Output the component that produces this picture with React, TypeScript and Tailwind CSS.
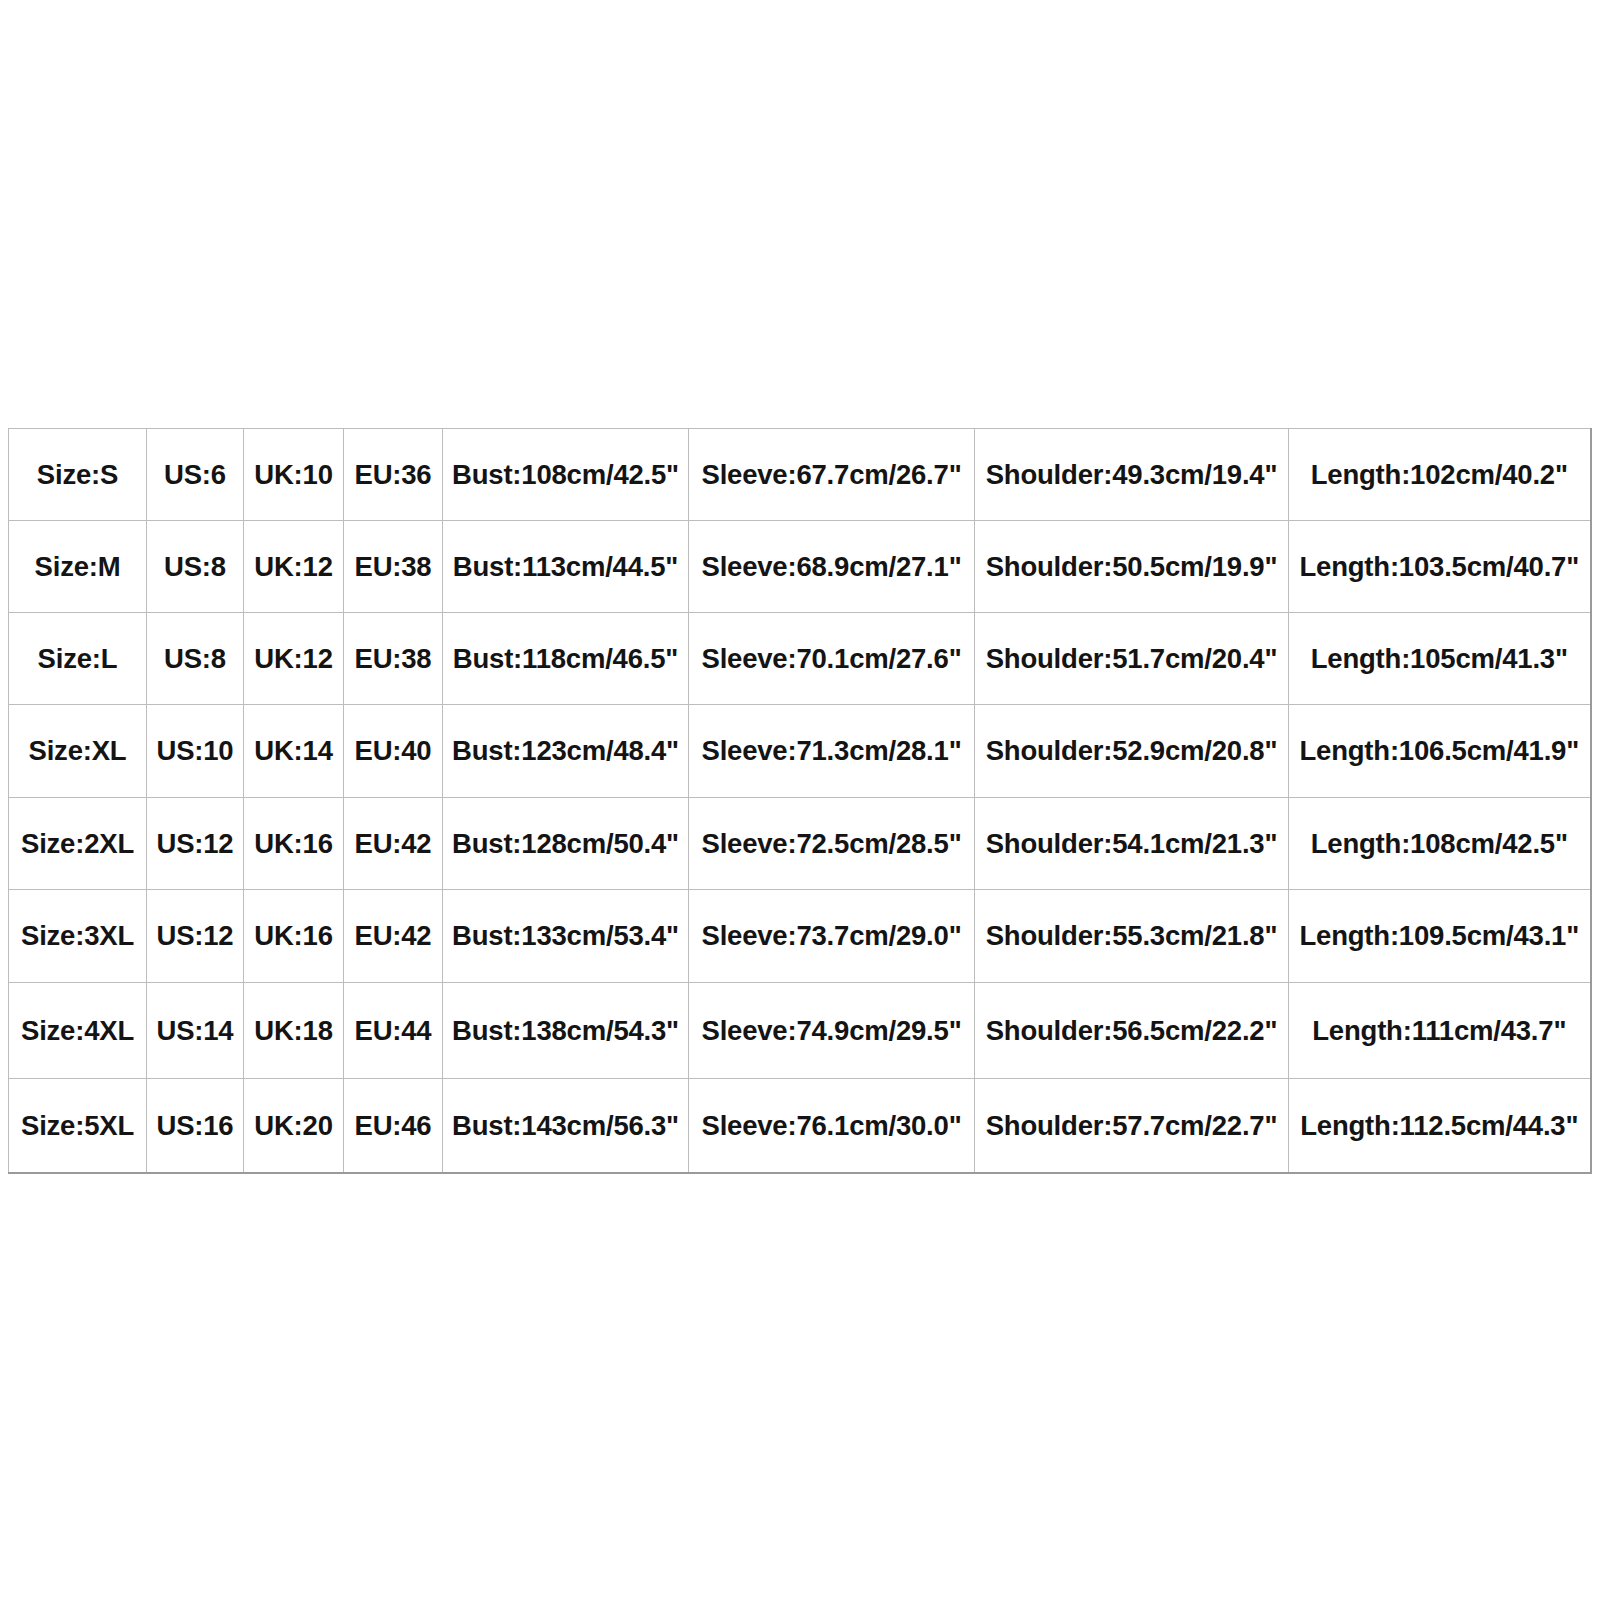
import React from 'react'

const rows = [
  { h: 'h-[92px]', cells: ['Size:S', 'US:6', 'UK:10', 'EU:36', 'Bust:108cm/42.5"', 'Sleeve:67.7cm/26.7"', 'Shoulder:49.3cm/19.4"', 'Length:102cm/40.2"'] },
  { h: 'h-[92px]', cells: ['Size:M', 'US:8', 'UK:12', 'EU:38', 'Bust:113cm/44.5"', 'Sleeve:68.9cm/27.1"', 'Shoulder:50.5cm/19.9"', 'Length:103.5cm/40.7"'] },
  { h: 'h-[92px]', cells: ['Size:L', 'US:8', 'UK:12', 'EU:38', 'Bust:118cm/46.5"', 'Sleeve:70.1cm/27.6"', 'Shoulder:51.7cm/20.4"', 'Length:105cm/41.3"'] },
  { h: 'h-[93px]', cells: ['Size:XL', 'US:10', 'UK:14', 'EU:40', 'Bust:123cm/48.4"', 'Sleeve:71.3cm/28.1"', 'Shoulder:52.9cm/20.8"', 'Length:106.5cm/41.9"'] },
  { h: 'h-[92px]', cells: ['Size:2XL', 'US:12', 'UK:16', 'EU:42', 'Bust:128cm/50.4"', 'Sleeve:72.5cm/28.5"', 'Shoulder:54.1cm/21.3"', 'Length:108cm/42.5"'] },
  { h: 'h-[93px]', cells: ['Size:3XL', 'US:12', 'UK:16', 'EU:42', 'Bust:133cm/53.4"', 'Sleeve:73.7cm/29.0"', 'Shoulder:55.3cm/21.8"', 'Length:109.5cm/43.1"'] },
  { h: 'h-[96px]', cells: ['Size:4XL', 'US:14', 'UK:18', 'EU:44', 'Bust:138cm/54.3"', 'Sleeve:74.9cm/29.5"', 'Shoulder:56.5cm/22.2"', 'Length:111cm/43.7"'] },
  { h: 'h-[94px]', cells: ['Size:5XL', 'US:16', 'UK:20', 'EU:46', 'Bust:143cm/56.3"', 'Sleeve:76.1cm/30.0"', 'Shoulder:57.7cm/22.7"', 'Length:112.5cm/44.3"'] },
]

export default function App() {
  return (
    <div className="w-[1600px] h-[1600px] bg-white pt-[428px] pl-[8px]">
      <table className="w-[1582px] table-fixed border-collapse border-r-2 border-b-2 border-r-[#9a9a9a] border-b-[#9a9a9a] font-['Liberation_Sans',Arial,sans-serif] text-[27.5px] font-bold text-[#141414]">
        <colgroup>
          <col className="w-[138px]" />
          <col className="w-[97px]" />
          <col className="w-[100px]" />
          <col className="w-[99px]" />
          <col className="w-[246px]" />
          <col className="w-[286px]" />
          <col className="w-[314px]" />
          <col className="w-[302px]" />
        </colgroup>
        <tbody>
          {rows.map((row, i) => (
            <tr key={i} className={row.h}>
              {row.cells.map((c, j) => (
                <td key={j} className="border border-[#bdbdbd] p-0 text-center align-middle whitespace-nowrap tracking-[-0.2px]">
                  {c}
                </td>
              ))}
            </tr>
          ))}
        </tbody>
      </table>
    </div>
  )
}
